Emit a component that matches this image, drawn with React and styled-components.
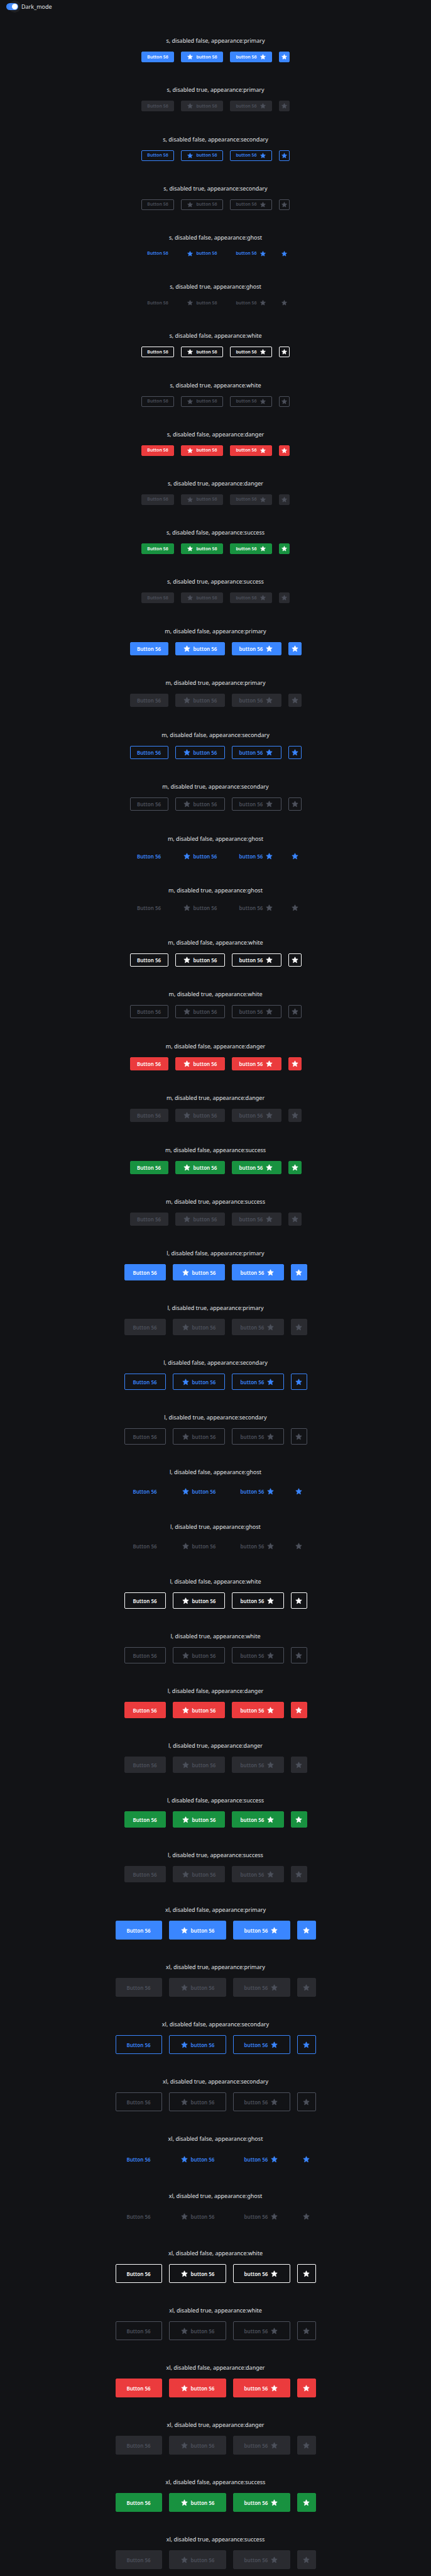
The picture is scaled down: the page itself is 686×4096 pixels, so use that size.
import React, { useState } from "react";
import styled, { createGlobalStyle, css } from "styled-components";

const SIZES = {
  s: { height: 17, width: 52, wide: 67, square: 17, icon: 11, font: 7, grow: 2 },
  m: { height: 21, width: 61, wide: 79, square: 21, icon: 13, font: 8, grow: 5 },
  l: { height: 26, width: 66, wide: 83, square: 26, icon: 13, font: 8, grow: 0 },
  xl: { height: 30, width: 74, wide: 91, square: 30, icon: 13, font: 8, grow: 0 },
};

const BLUE = "#3a86ff";
const MUTED = "#4d515c";
const APPEARANCES = {
  primary: { fill: BLUE, text: "#ffffff" },
  secondary: { line: BLUE, text: BLUE },
  ghost: { text: BLUE },
  white: { line: "#ffffff", text: "#ffffff" },
  danger: { fill: "#eb3b3d", text: "#ffffff" },
  success: { fill: "#189240", text: "#ffffff" },
};

const GlobalStyle = createGlobalStyle`
  *, *::before, *::after { box-sizing: border-box; }
  body {
    margin: 0;
    background: #121316;
    color: #e1e3e6;
    font-family: "Noto Sans", "Open Sans", sans-serif;
    font-size: 9px;
    line-height: 14px;
  }
`;

const Page = styled.main`
  display: flex;
  flex-direction: column;
  min-height: 100vh;
`;

const Toolbar = styled.header`
  display: flex;
  align-items: center;
  height: 21px;
  margin-bottom: 11px;
  padding-left: 10px;
`;

const SwitchLabel = styled.label`
  display: flex;
  align-items: center;
  gap: 5px;
  cursor: pointer;
`;

const Switch = styled.input`
  appearance: none;
  display: flex;
  align-items: center;
  width: 19px;
  height: 11px;
  margin: 0;
  padding: 1px;
  border-radius: 6px;
  background: ${MUTED};
  cursor: pointer;

  &::before {
    content: "";
    width: 9px;
    height: 9px;
    border-radius: 50%;
    background: #ffffff;
    box-shadow: 0 0 0 5px rgba(255, 255, 255, 0.06);
  }

  &:checked {
    justify-content: flex-end;
    background: ${BLUE};
  }
`;

const SizeSection = styled.section`
  display: grid;
  grid-auto-rows: 1fr;
  flex: ${({ $size }) => SIZES[$size].grow} 0 auto;
`;

const Variant = styled.div`
  display: flex;
  flex-direction: column;
  align-items: center;
  justify-content: flex-end;
  gap: 10px;
  padding: 26px 0 11px;
`;

const Caption = styled.div`
  white-space: nowrap;
`;

const ButtonRow = styled.div`
  display: flex;
  gap: 11px;
`;

const Button = styled.button`
  display: inline-flex;
  align-items: center;
  justify-content: center;
  gap: 4px;
  padding: 0;
  border: 1px solid transparent;
  border-radius: 2px;
  font-family: inherit;
  font-weight: 600;
  white-space: nowrap;
  cursor: pointer;

  ${({ $size, $shape }) => css`
    width: ${SIZES[$size][$shape]}px;
    height: ${SIZES[$size].height}px;
    font-size: ${SIZES[$size].font}px;
    line-height: ${SIZES[$size].font + 3}px;
  `}

  ${({ $appearance }) => {
    const { fill, line, text } = APPEARANCES[$appearance];
    return css`
      background: ${fill || "transparent"};
      border-color: ${fill || line || "transparent"};
      color: ${text};

      &:disabled {
        background: ${fill ? "#2a2b30" : "transparent"};
        border-color: ${fill ? "#2a2b30" : line ? MUTED : "transparent"};
        color: ${MUTED};
        cursor: default;
      }
    `;
  }}
`;

const StarIcon = styled.svg`
  flex: none;
  width: ${({ $size }) => SIZES[$size].icon}px;
  height: ${({ $size }) => SIZES[$size].icon}px;
  fill: currentColor;
  stroke: currentColor;
  stroke-width: 1.6;
  stroke-linejoin: round;
`;

function Star({ size }) {
  return (
    <StarIcon $size={size} viewBox="0 0 24 24" aria-hidden="true">
      <path d="M12 3.3l2.5 5.7 6.1.6-4.6 4.1 1.3 6.1-5.3-3.1-5.3 3.1 1.3-6.1-4.6-4.1 6.1-.6z" />
    </StarIcon>
  );
}

function ButtonVariant({ size, disabled, appearance }) {
  const shared = { type: "button", disabled, $size: size, $appearance: appearance };
  return (
    <Variant>
      <Caption>{`${size}, disabled ${disabled}, appearance:${appearance}`}</Caption>
      <ButtonRow>
        <Button {...shared} $shape="width">Button 56</Button>
        <Button {...shared} $shape="wide">
          <Star size={size} />
          button 56
        </Button>
        <Button {...shared} $shape="wide">
          button 56
          <Star size={size} />
        </Button>
        <Button {...shared} $shape="square" aria-label="Star">
          <Star size={size} />
        </Button>
      </ButtonRow>
    </Variant>
  );
}

export default function App() {
  const [dark, setDark] = useState(true);
  return (
    <>
      <GlobalStyle />
      <Page>
        <Toolbar>
          <SwitchLabel htmlFor="dark-mode">
            <Switch
              id="dark-mode"
              type="checkbox"
              role="switch"
              checked={dark}
              onChange={(event) => setDark(event.target.checked)}
            />
            Dark_mode
          </SwitchLabel>
        </Toolbar>
        {Object.keys(SIZES).map((size) => (
          <SizeSection key={size} $size={size}>
            {Object.keys(APPEARANCES).flatMap((appearance) =>
              [false, true].map((disabled) => (
                <ButtonVariant
                  key={`${appearance}-${disabled}`}
                  size={size}
                  disabled={disabled}
                  appearance={appearance}
                />
              ))
            )}
          </SizeSection>
        ))}
      </Page>
    </>
  );
}
